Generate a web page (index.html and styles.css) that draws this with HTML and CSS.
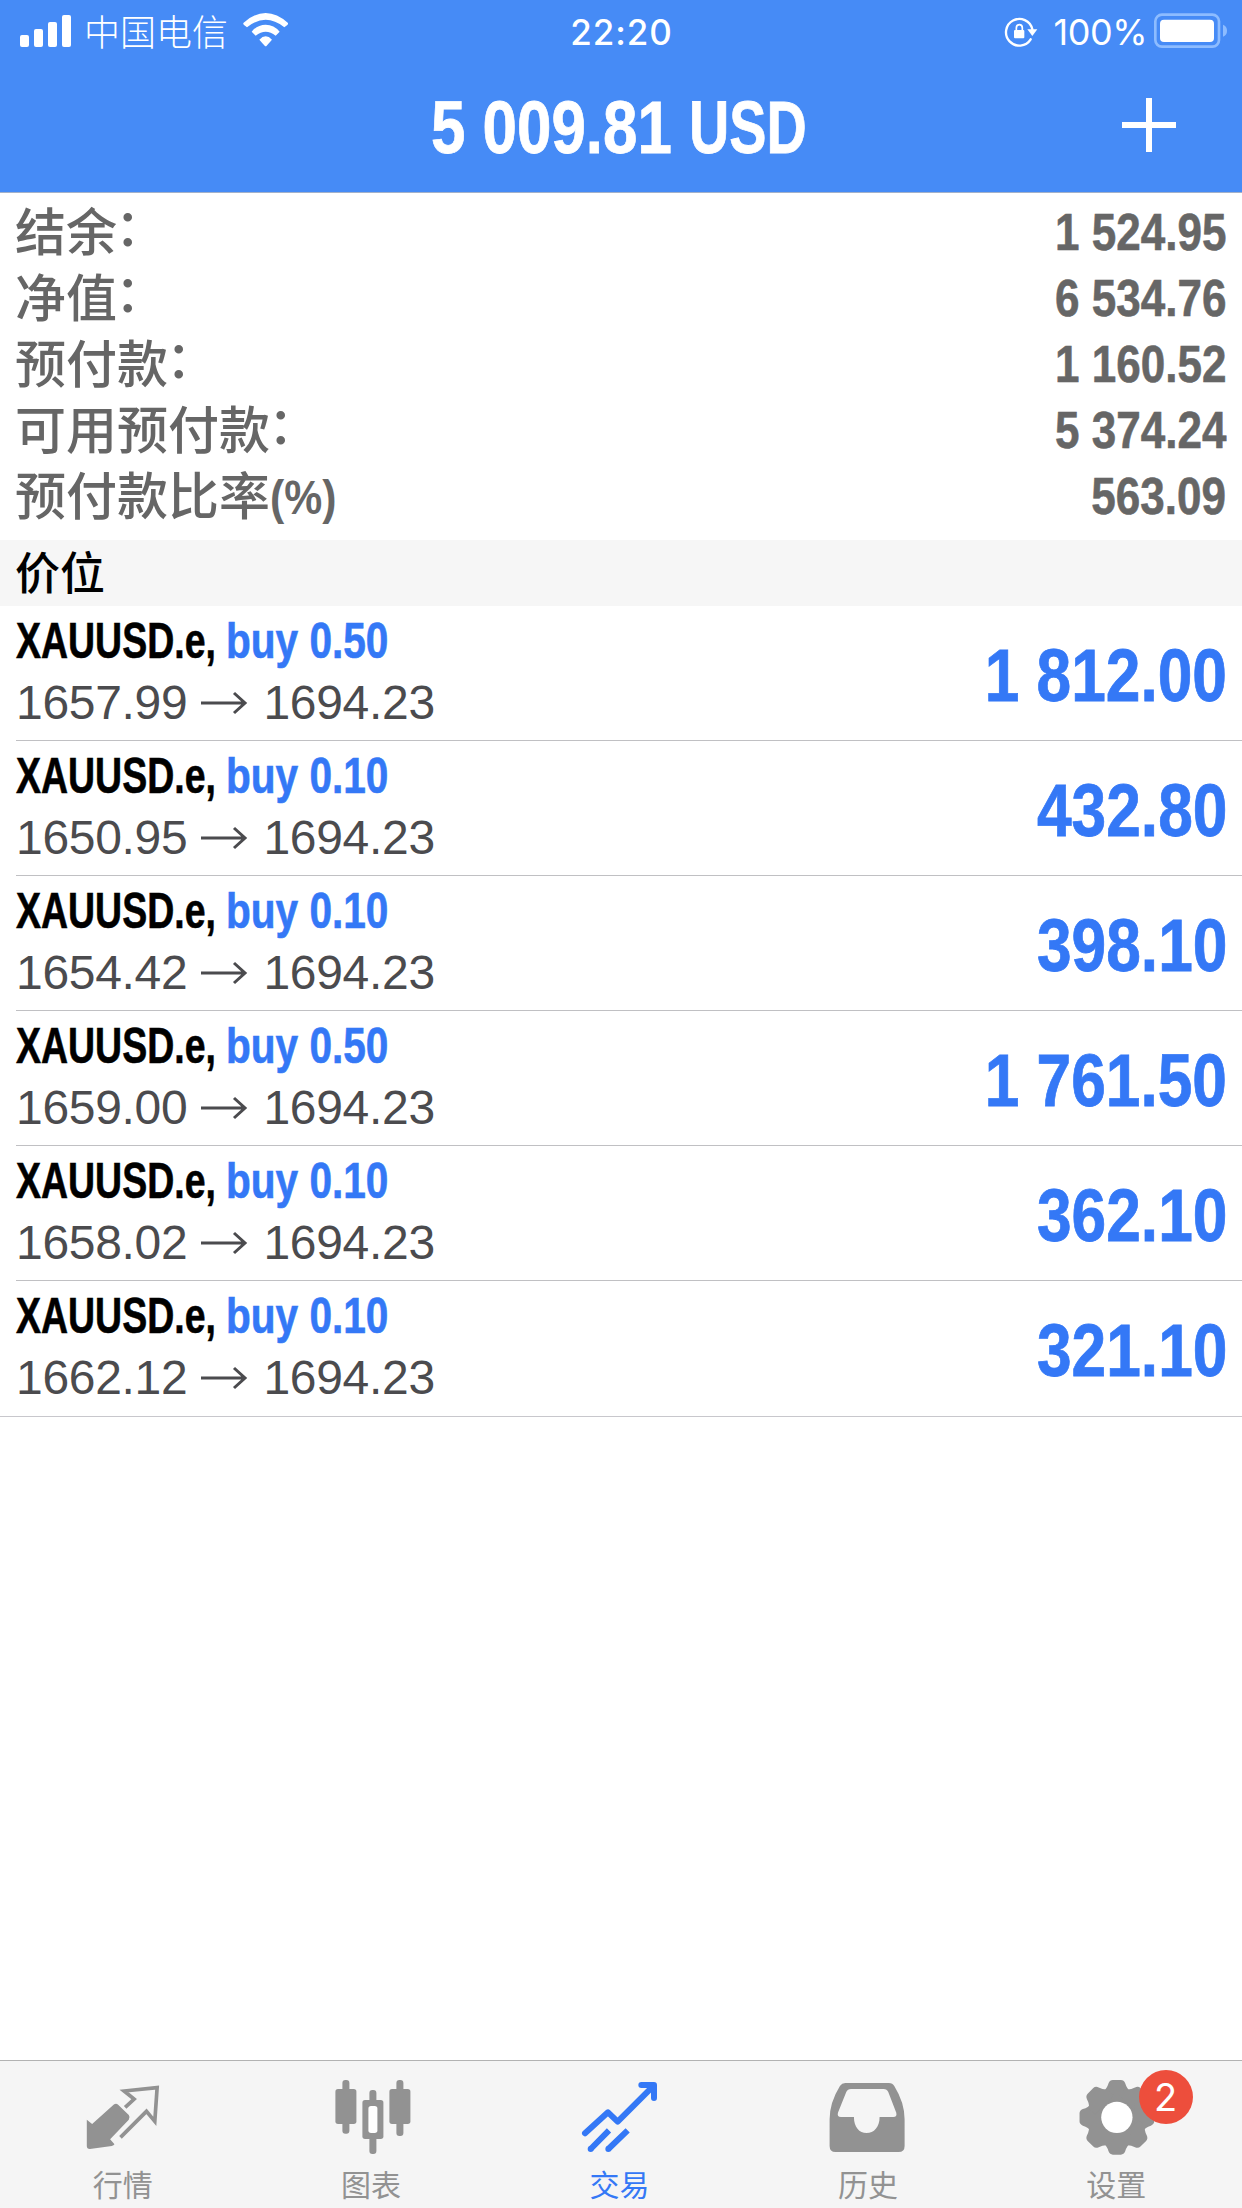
FILE: index.html
```html
<!DOCTYPE html>
<html lang="zh-CN">
<head>
<meta charset="utf-8">
<title>交易</title>
<link rel="stylesheet" href="styles.css">
</head>
<body>
<div class="app">
  <header class="header">
    <div class="status">
      <div class="status-left">
        <svg class="signal" viewBox="0 0 51 33" width="51" height="33"><g fill="#fff"><rect x="0" y="20" width="9" height="12" rx="2"/><rect x="14" y="14" width="9" height="18" rx="2"/><rect x="28" y="7" width="9" height="25" rx="2"/><rect x="42" y="0" width="9" height="32" rx="2"/></g></svg>
        <span class="carrier">中国电信</span>
        <svg class="wifi" viewBox="730 36 138 105" width="46" height="35"><g fill="#fff"><path d="M731 69Q764 39 798 39T865 69Q866 72 863 75L854 82Q798 37 742 82L733 75Q730 72 731 69Z"/><path d="M756 95Q773 74 798 74T840 95L828 107Q798 84 768 107Z"/><path d="M779 119Q798 99 817 119L801 137Q798 140 795 137Z"/></g></svg>
      </div>
      <time class="clock">22:20</time>
      <div class="status-right">
        <svg class="lock" viewBox="498 48 102 93" width="34" height="31"><path d="M578 118A40 40 0 1 1 583 88" fill="none" stroke="#fff" stroke-width="7" stroke-linecap="round"/><path d="M568 88H598L583 108Z" fill="#fff"/><rect x="528" y="90" width="31" height="25" rx="3" fill="#fff"/><path d="M535 92V84Q535 74 544 74T553 84V92" fill="none" stroke="#fff" stroke-width="5"/></svg>
        <span class="percent">100%</span>
        <svg class="battery" viewBox="939 37 222 105" width="74" height="35"><rect x="943" y="42" width="191" height="96" rx="20" fill="none" stroke="#8dbcff" stroke-width="8"/><rect x="957" y="57" width="162" height="67" rx="12" fill="#fff"/><path d="M1146 72Q1158 77 1158 90T1146 108Z" fill="#8dbcff"/></svg>
      </div>
    </div>
    <div class="titlebar">
      <h1 class="title"><span class="title-num">5 009.81</span><span class="title-cur">USD</span></h1>
      <svg class="plus" viewBox="0 0 54 54" width="54" height="54"><path d="M27 0V54M0 27H54" stroke="#fff" stroke-width="6"/></svg>
    </div>
  </header>

  <dl class="summary">
    <div class="sum-row"><dt>结余<span class="colon">：</span></dt><dd>1 524.95</dd></div>
    <div class="sum-row"><dt>净值<span class="colon">：</span></dt><dd>6 534.76</dd></div>
    <div class="sum-row"><dt>预付款<span class="colon">：</span></dt><dd>1 160.52</dd></div>
    <div class="sum-row"><dt>可用预付款<span class="colon">：</span></dt><dd>5 374.24</dd></div>
    <div class="sum-row"><dt>预付款比率<span class="unit">(%)</span></dt><dd>563.09</dd></div>
  </dl>

  <h2 class="section">价位</h2>
  <ul class="positions">
    <li class="position"><div class="deal"><div class="name"><span class="symbol">XAUUSD.e,</span><span class="side">buy 0.50</span></div><div class="prices">1657.99<svg class="arrow" viewBox="0 0 48 24"><path d="M1 12H45M34 2L45 12L34 22"/></svg>1694.23</div></div><span class="profit">1 812.00</span></li>
    <li class="position"><div class="deal"><div class="name"><span class="symbol">XAUUSD.e,</span><span class="side">buy 0.10</span></div><div class="prices">1650.95<svg class="arrow" viewBox="0 0 48 24"><path d="M1 12H45M34 2L45 12L34 22"/></svg>1694.23</div></div><span class="profit">432.80</span></li>
    <li class="position"><div class="deal"><div class="name"><span class="symbol">XAUUSD.e,</span><span class="side">buy 0.10</span></div><div class="prices">1654.42<svg class="arrow" viewBox="0 0 48 24"><path d="M1 12H45M34 2L45 12L34 22"/></svg>1694.23</div></div><span class="profit">398.10</span></li>
    <li class="position"><div class="deal"><div class="name"><span class="symbol">XAUUSD.e,</span><span class="side">buy 0.50</span></div><div class="prices">1659.00<svg class="arrow" viewBox="0 0 48 24"><path d="M1 12H45M34 2L45 12L34 22"/></svg>1694.23</div></div><span class="profit">1 761.50</span></li>
    <li class="position"><div class="deal"><div class="name"><span class="symbol">XAUUSD.e,</span><span class="side">buy 0.10</span></div><div class="prices">1658.02<svg class="arrow" viewBox="0 0 48 24"><path d="M1 12H45M34 2L45 12L34 22"/></svg>1694.23</div></div><span class="profit">362.10</span></li>
    <li class="position"><div class="deal"><div class="name"><span class="symbol">XAUUSD.e,</span><span class="side">buy 0.10</span></div><div class="prices">1662.12<svg class="arrow" viewBox="0 0 48 24"><path d="M1 12H45M34 2L45 12L34 22"/></svg>1694.23</div></div><span class="profit">321.10</span></li>
  </ul>

  <nav class="tabs">
    <a class="tab">
      <svg class="tab-icon" viewBox="237.6 33 270 288"><path d="M261 209L277 222L343 163Q349 159 355 164L387 195Q392 202 387 209L331 268L344 283Q342 287 336 288L270 297Q261 297 261 288Z" fill="#929292"/><path d="M376 172L403 147L373 123L472 113L465 214L440 184L362 262" fill="none" stroke="#929292" stroke-width="11" stroke-linejoin="miter"/></svg>
      <span>行情</span>
    </a>
    <a class="tab">
      <svg class="tab-icon" viewBox="982.8 33 270 288"><g fill="#929292"><rect x="1026" y="90" width="21" height="161" rx="9"/><rect x="1005" y="117" width="63" height="105" rx="8"/><rect x="1188" y="90" width="21" height="168" rx="9"/><rect x="1167" y="117" width="63" height="105" rx="8"/><rect x="1107" y="120" width="21" height="40" rx="9"/><rect x="1107" y="250" width="21" height="62" rx="9"/><path d="M1094 150h47q8 0 8 8v101q0 8-8 8h-47q-8 0-8-8V158q0-8 8-8Z"/></g><rect x="1104" y="168" width="27" height="81" rx="8" fill="#fff"/></svg>
      <span>图表</span>
    </a>
    <a class="tab tab-active">
      <svg class="tab-icon" viewBox="348 33 270 288"><g fill="none" stroke="#3478f6" stroke-width="18" stroke-linejoin="round"><path stroke-linecap="round" d="M375 250L444 187L473 215L581 107M544 105H582V144"/><path d="M392 297L447 241M445 297L503 241"/></g><g fill="#3478f6"><circle cx="392" cy="297" r="9"/><circle cx="445" cy="297" r="9"/></g></svg>
      <span>交易</span>
    </a>
    <a class="tab">
      <svg class="tab-icon" viewBox="1093.2 33 270 288"><path fill="#929292" fill-rule="evenodd" d="M1157 99H1288Q1299 99 1304 108Q1335 158 1335 208V288Q1335 306 1317 306H1128Q1110 306 1110 288V208Q1110 158 1141 108Q1147 99 1157 99ZM1174 117Q1164 117 1160 126L1135 188Q1132 201 1144 201H1183C1183 232 1199 249 1221 249S1260 232 1260 201H1301Q1313 201 1310 188L1286 126Q1282 117 1272 117Z"/></svg>
      <span>历史</span>
    </a>
    <a class="tab">
      <svg class="tab-icon" viewBox="218.4 33 270 288"><defs><path id="tooth" d="M309 124Q320 117 325 100Q329 90 338 90H362Q371 90 375 100Q380 117 391 124V150H309Z"/></defs><g fill="#929292"><circle cx="350" cy="202" r="85"/><use href="#tooth"/><use href="#tooth" transform="rotate(45 350 202)"/><use href="#tooth" transform="rotate(90 350 202)"/><use href="#tooth" transform="rotate(135 350 202)"/><use href="#tooth" transform="rotate(180 350 202)"/><use href="#tooth" transform="rotate(225 350 202)"/><use href="#tooth" transform="rotate(270 350 202)"/><use href="#tooth" transform="rotate(315 350 202)"/></g><circle cx="350" cy="202" r="47" fill="#fff"/></svg>
      <span>设置</span>
      <b class="badge">2</b>
    </a>
  </nav>
</div>
</body>
</html>
```
FILE: styles.css
```css
* { box-sizing: border-box; margin: 0; padding: 0; }

body {
  background: #fff;
  font-family: "Liberation Sans", "Noto Sans CJK SC", sans-serif;
}

svg { display: block; flex: none; }

.app {
  display: flex;
  flex-direction: column;
  width: 1242px;
  height: 2208px;
  overflow: hidden;
}

/* Header */
.header {
  height: 193px;
  background: #468bf6;
  border-bottom: 1px solid #a3b1c9;
  color: #fff;
}

.status {
  display: grid;
  grid-template-columns: 1fr auto 1fr;
  align-items: center;
  height: 62px;
  padding: 0 16px 0 20px;
}

.status-left, .status-right { display: flex; align-items: center; }
.status-right { justify-content: flex-end; }
.signal { margin-top: -1px; }

.carrier {
  margin: -4px 0 0 13px;
  font: 300 36px/62px "Noto Sans CJK SC", sans-serif;
}

.wifi { margin: -4px 0 0 15px; }

.clock {
  margin: 0 3px 0 0;
  font: 500 35px/62px Inter, sans-serif;
  letter-spacing: 0.9px;
}

.percent {
  margin: 1px 7px 0 16px;
  font: 400 36px/62px Inter, sans-serif;
  letter-spacing: -0.5px;
}

.lock { margin-top: 0; }
.battery { margin: -3px -2px 0 0; }

.titlebar {
  display: grid;
  grid-template-columns: 433px 260px 1fr 54px;
  align-items: center;
  height: 130px;
  padding-right: 66px;
}

.plus { margin-top: -4px; }

.title {
  display: contents;
  white-space: nowrap;
}

.title-num, .title-cur {
  display: block;
  font: 700 75px/130px "Liberation Sans", sans-serif;
  -webkit-text-stroke: 0.8px currentColor;
  transform-origin: 0 50%;
}

.title-num { grid-column: 2; transform: translateX(-2px) scaleX(0.825); }
.title-cur { transform: translateX(-4px) scaleX(0.743); }

/* Account summary */
.summary { height: 347px; padding: 6px 16px 0 15px; }

.sum-row {
  display: flex;
  justify-content: space-between;
  height: 66px;
  color: #666;
  line-height: 66px;
  white-space: nowrap;
}

.sum-row dt {
  margin-top: -3px;
  font: 500 51px/66px "Noto Sans CJK SC", sans-serif;
}

.colon {
  display: inline-block;
  transform: translate(-2px, -5px);
}

.unit {
  display: inline-block;
  font: 700 48px/60px "Liberation Sans", sans-serif;
  transform: translateY(-1px) scaleX(0.89);
  transform-origin: 0 50%;
}

.sum-row dd {
  font-size: 52px;
  font-weight: 700;
  -webkit-text-stroke: 0.6px currentColor;
  transform: scaleX(0.847);
  transform-origin: 100% 50%;
}

.section {
  height: 66px;
  padding-left: 15px;
  background: #f6f6f6;
  color: #000;
  font: 500 45px/62px "Noto Sans CJK SC", sans-serif;
}

/* Open positions */
.positions { list-style: none; border-bottom: 1px solid #c8c7cc; }

.position {
  display: flex;
  justify-content: space-between;
  height: 135px;
  margin-left: 16px;
  padding-right: 15px;
  border-bottom: 1px solid #c0c0c3;
}

.position:last-child { border-bottom: 0; }

.name {
  display: grid;
  grid-template-columns: 210px auto;
  height: 62px;
  padding-top: 5px;
  font-size: 49.5px;
  font-weight: 700;
  line-height: 60px;
  white-space: nowrap;
  -webkit-text-stroke: 0.6px currentColor;
}

.symbol, .side { width: max-content; transform-origin: 0 50%; }
.symbol { color: #000; transform: scaleX(0.757); }
.side { color: #3478f6; transform: scaleX(0.82); }

.prices {
  display: flex;
  align-items: center;
  height: 62px;
  margin-top: 4px;
  color: #4b4b4e;
  font-size: 48px;
  letter-spacing: -0.3px;
  line-height: 62px;
}

.arrow {
  width: 48px;
  height: 24px;
  margin: 0 15px 0 13px;
  fill: none;
  stroke: #4b4b4e;
  stroke-width: 3;
}

.profit {
  color: #3478f6;
  font-size: 75px;
  font-weight: 700;
  line-height: 138px;
  -webkit-text-stroke: 0.8px currentColor;
  transform: scaleX(0.83);
  transform-origin: 100% 50%;
}

/* Bottom tab bar */
.tabs {
  display: grid;
  grid-template-columns: repeat(5, 1fr);
  height: 148px;
  margin-top: auto;
  background: #f5f5f5;
  border-top: 1px solid #b2b2b2;
}

.tab {
  position: relative;
  display: flex;
  flex-direction: column;
  align-items: center;
  color: #929292;
  font: 400 30px/53px "Noto Sans CJK SC", sans-serif;
}

.tab span { margin-right: 3px; }
.tab-icon { width: 90px; height: 96px; }
.tab-active { color: #3478f6; }

.badge {
  position: absolute;
  top: 9px;
  left: 145px;
  width: 54px;
  height: 54px;
  border-radius: 50%;
  background: #ed4e3c;
  color: #fff;
  font: 400 38px/54px Inter, sans-serif;
  text-align: center;
}
```
